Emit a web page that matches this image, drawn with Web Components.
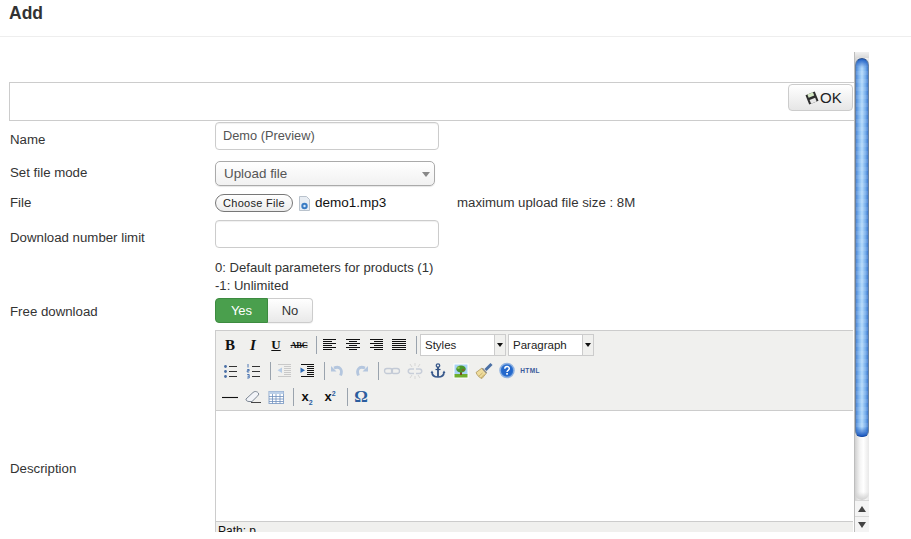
<!DOCTYPE html>
<html>
<head>
<meta charset="utf-8">
<title>Add</title>
<style>
  html, body { margin: 0; background: #fff; height: 539px; overflow: hidden; }
  body { font: 13.25px/18px "Liberation Sans", Arial, sans-serif; color: #333; }
</style>
</head>
<body>
<page-header>Add</page-header>
<scroll-panel>
  <ok-bar>OK</ok-bar>
  <form-row style="--top:1px" label-top="9px">
    <span slot="label">Name</span>
    <text-field>Demo (Preview)</text-field>
  </form-row>
  <form-row style="--top:11px" label-top="3px">
    <span slot="label">Set file mode</span>
    <select-field>Upload file</select-field>
  </form-row>
  <form-row style="--top:8px" label-top="0px">
    <span slot="label">File</span>
    <file-picker file="demo1.mp3" note="maximum upload file size : 8M"></file-picker>
  </form-row>
  <form-row style="--top:8px" label-top="9px">
    <span slot="label">Download number limit</span>
    <text-field></text-field>
  </form-row>
  <form-row style="--top:11px" label-top="0px">
    <div style="font-size:13.100px">0: Default parameters for products (1)<br>-1: Unlimited</div>
  </form-row>
  <form-row style="--top:3px" label-top="5px">
    <span slot="label">Free download</span>
    <yes-no></yes-no>
  </form-row>
  <form-row style="--top:7px" label-top="130px">
    <span slot="label">Description</span>
    <rich-editor></rich-editor>
  </form-row>
</scroll-panel>

<script>
// toolbar glyphs, all in a 20x20 box
const BLUE = '#2b5d9e';
const ICONS = {
  left: '<path d="M3 4.500h13M3 6.500h9M3 8.500h13M3 10.500h9M3 12.500h13M3 14.500h9" stroke="#111"/>',
  center: '<path d="M3 4.500h14M6 6.500h8M3 8.500h14M6 10.500h8M3 12.500h14M6 14.500h8" stroke="#111"/>',
  right: '<path d="M4 4.500h13M8 6.500h9M4 8.500h13M8 10.500h9M4 12.500h13M8 14.500h9" stroke="#111"/>',
  justify: '<path d="M3 4.500h14M3 6.500h14M3 8.500h14M3 10.500h14M3 12.500h14M3 14.500h14" stroke="#111"/>',
  bullist: `<path d="M9 5.500h8M9 10.500h8M9 15.500h8" stroke="#333"/><circle cx="5.500" cy="5.500" r="1.400" fill="#4a6fa5"/><circle cx="5.500" cy="10.500" r="1.400" fill="#4a6fa5"/><circle cx="5.500" cy="15.500" r="1.400" fill="#4a6fa5"/>`,
  numlist: `<path d="M9 5.500h8M9 10.500h8M9 15.500h8" stroke="#333"/><path d="M5 3v3.500M4.200 8.500h2v1.200h-2v1.300h2M4.200 13.500h2v3.500h-2M4.500 15.200h1.500" stroke="#3a69ad" stroke-width=".9" fill="none"/>`,
  outdent: `<path d="M4 3.500h13M10 5.500h7M10 7.500h7M10 9.500h7M10 11.500h7M10 13.500h7M4 15.500h13" stroke="#c9c9c9"/><path d="M8 6.500v5.500L3.500 9.200z" fill="#b5cbe6"/>`,
  indent: `<path d="M4 3.500h13M10 5.500h7M10 7.500h7M10 9.500h7M10 11.500h7M10 13.500h7M4 15.500h13" stroke="#111"/><path d="M3.500 6.500v5.500L8 9.200z" fill="#2f6bb5"/>`,
  undo: `<path d="M6 7c6-2.500 9 2 6.500 7.500" fill="none" stroke="#b4c6de" stroke-width="2.800"/><path d="M3 5v5.500h5.500z" fill="#b4c6de"/>`,
  redo: `<path d="M14 7c-6-2.500-9 2-6.500 7.500" fill="none" stroke="#b4c6de" stroke-width="2.800"/><path d="M17 5v5.500h-5.500z" fill="#b4c6de"/>`,
  link: `<rect x="2.500" y="7.500" width="8" height="5" rx="2.500" fill="none" stroke="#c3cad6" stroke-width="1.300"/><rect x="9.500" y="7.500" width="8" height="5" rx="2.500" fill="none" stroke="#c3cad6" stroke-width="1.300"/>`,
  unlink: `<path d="M9 8H5.500a2 2 0 0 0 0 4.500H9M11 8h3.500a2 2 0 0 1 0 4.500H11" fill="none" stroke="#c8ced9" stroke-width="1.500"/><path d="M10 2v3M10 15v3M5 3l2 3M15 3l-2 3M5 17l2-3M15 17l-2-3" stroke="#d6d6d6"/>`,
  anchor: `<circle cx="10" cy="4.500" r="1.700" fill="none" stroke="#3a5a8c" stroke-width="1.300"/><path d="M10 6v10" stroke="#2f4f80" stroke-width="1.800"/><path d="M7.500 8.500h5" stroke="#2f4f80" stroke-width="1.200"/><path d="M4 11c0 3.500 3 5 6 5s6-1.500 6-5" fill="none" stroke="#3a5a8c" stroke-width="1.700"/><path d="M2.500 12l1.500-2.500L5.500 12M14.500 12l1.500-2.500 1.500 2.500" fill="#3a5a8c"/>`,
  image: `<rect x="2.500" y="2.500" width="15" height="15" fill="#fff"/><rect x="3.500" y="3.500" width="13" height="10" fill="#a9d3f5"/><rect x="3.500" y="13" width="13" height="3.500" fill="#6fae2e"/><rect x="9" y="10" width="2" height="4" fill="#7a4a22"/><ellipse cx="10" cy="8" rx="4.800" ry="3.500" fill="#4a962c"/><circle cx="7.500" cy="6.800" r="1.300" fill="#8ec548"/><circle cx="12.300" cy="9" r="1.100" fill="#9a4a32"/>`,
  cleanup: `<path d="M2 11.500l6-4.500 4.500 5-4.500 5.500c-2.500-.5-5-3.500-6-6z" fill="#efdc9c" stroke="#a58d4d" stroke-width=".7"/><path d="M4.500 15.500l4-3.500M7 17l3-3.500" stroke="#b89f5c" stroke-width=".7"/><path d="M11.500 9L17.500 3" stroke="#4a6fa5" stroke-width="3"/><path d="M8.500 7.500l4 4.500" stroke="#8f8f8f" stroke-width="1.500"/>`,
  help: `<circle cx="10" cy="9.500" r="7" fill="#2f72d0" stroke="#8fb2e2" stroke-width="1.500"/><circle cx="10" cy="9.500" r="5.200" fill="#2468cc"/><path d="M7.800 7.800c0-3 4.500-3 4.500-.2 0 1.800-2.300 1.700-2.300 3.500" fill="none" stroke="#fff" stroke-width="1.500"/><rect x="9.200" y="12" width="1.700" height="1.700" fill="#fff"/>`,
  hr: '<path d="M2 10.500h16" stroke="#111" stroke-width="1.100"/>',
  eraser: `<path d="M3 12l7-6.500c1.500-1.300 3-1.300 4.500-.3s1.500 2.500.3 3.600L9 14.500H6c-1.500 0-3.500-1-3-2.500z" fill="#f2f4f8" stroke="#7d8794"/><path d="M8 15.500h10" stroke="#444"/>`,
  table: `<rect x="3" y="4.500" width="14.500" height="12" fill="#fff" stroke="#8fa9cc"/><rect x="3" y="4.500" width="14.500" height="2.500" fill="#bcd0e8"/><path d="M6.500 7v9.500M10 7v9.500M14 7v9.500M3 9.500h14.500M3 12h14.500M3 14.500h14.500" stroke="#6f8fbd" stroke-width=".8"/>`,
};

class PageHeader extends HTMLElement {
  constructor() {
    super();
    this.attachShadow({ mode: 'open' }).innerHTML = `
      <style>
        :host { display: block; height: 36px; border-bottom: 1px solid #eee; padding-left: 9px;
          font-size: 17.500px; font-weight: bold; line-height: 27px; color: #333; }
      </style><slot></slot>`;
  }
}

class ScrollPanel extends HTMLElement {
  constructor() {
    super();
    this.attachShadow({ mode: 'open' }).innerHTML = `
      <style>
        :host { display: flex; width: 869px; height: 480px; margin-top: 15px; }
        .body { flex: 1; min-width: 0; overflow: hidden; padding-top: 30px; box-sizing: border-box; }
        .bar { width: 15px; flex: none; display: flex; flex-direction: column; box-sizing: border-box;
          border-left: 1px solid #bdbdbd;
          background: linear-gradient(90deg, #d0d0d0, #f4f4f4 35%, #fff 60%, #e8e8e8); }
        .cap { height: 6px; background: linear-gradient(#f0f0f0, #d8d8d8); }
        .thumb { height: 379px; border-radius: 7px 7px 6px 6px; flex: none; box-sizing: border-box;
          border: 1px solid #66809f; border-top-color: #2a4f8a; border-bottom-color: #1c4fa8;
          background: linear-gradient(#1f5fc4 0, #0000 9px, #0000 calc(100% - 9px), #1a58c0 100%),
            repeating-linear-gradient(#0000 0 4px, #ffffff18 4px 8px),
            linear-gradient(90deg, #4c86d6, #82b8f0 25%, #b4dafb 50%, #74acea 80%, #3f7ace); }
        .track { flex: 1; border-radius: 0 0 7px 7px;
          background: linear-gradient(#0000 calc(100% - 8px), #cfcfcf 100%); }
        .arrow { height: 16px; display: flex; align-items: center; justify-content: center; background: #f4f4f4; border-top: 1px solid #d8d8d8; box-sizing: border-box; }
        .up { border-bottom: 6px solid #444; border-left: 4px solid #0000; border-right: 4px solid #0000; }
        .down { border-top: 6px solid #444; border-left: 4px solid #0000; border-right: 4px solid #0000; }
      </style>
      <div class="body"><slot></slot></div>
      <div class="bar">
        <div class="cap"></div><div class="thumb"></div><div class="track"></div>
        <div class="arrow"><i class="up"></i></div><div class="arrow"><i class="down"></i></div>
      </div>`;
  }
}

class OkBar extends HTMLElement {
  constructor() {
    super();
    this.attachShadow({ mode: 'open' }).innerHTML = `
      <style>
        :host { display: flex; justify-content: flex-end; margin-left: 9px; height: 39px; box-sizing: border-box;
          border: 1px solid #ccc; border-right: 0; padding: 1px 1px 0 0; }
        button { all: unset; box-sizing: border-box; width: 65px; height: 27px; display: flex; align-items: center; gap: 1px;
          padding-left: 16px; border: 1px solid #ccc; border-radius: 4px; font-size: 15px; color: #222;
          background: linear-gradient(#fff, #e6e6e6); }
        svg { flex: none; }
      </style>
      <button>
        <svg width="14" height="14" viewBox="0 0 14 14"><g transform="rotate(-22 7 7)"><rect x="2" y="2" width="10" height="10" fill="#2e2e2e"/><rect x="4" y="2" width="6" height="3.500" fill="#d5e8c6"/><rect x="4" y="8" width="6" height="4" fill="#e8e8e8"/></g></svg>
        <slot></slot>
      </button>`;
  }
}

class FormRow extends HTMLElement {
  constructor() {
    super();
    this.attachShadow({ mode: 'open' }).innerHTML = `
      <style>
        :host { display: grid; grid-template-columns: 205px 1fr; padding-left: 10px; margin-top: var(--top, 0); }
        .label { padding-top: var(--label-top, 0); }
        .control { min-width: 0; }
      </style>
      <div class="label"><slot name="label"></slot></div>
      <div class="control"><slot></slot></div>`;
  }
  connectedCallback() {
    this.style.setProperty('--label-top', this.getAttribute('label-top') || '0');
  }
}

class TextField extends HTMLElement {
  constructor() {
    super();
    this.attachShadow({ mode: 'open' }).innerHTML = `
      <style>
        :host { display: block; width: 224px; height: 28px; box-sizing: border-box; border: 1px solid #ccc; border-radius: 4px;
          padding: 3px 7px; font-size: 12.800px; line-height: 20px; color: #555; box-shadow: inset 0 1px 1px #00000010; }
      </style><slot></slot>`;
  }
}

class SelectField extends HTMLElement {
  constructor() {
    super();
    this.attachShadow({ mode: 'open' }).innerHTML = `
      <style>
        :host { display: flex; align-items: center; justify-content: space-between; width: 220px; height: 25px; box-sizing: border-box;
          border: 1px solid #aaa; border-radius: 5px; padding: 0 4px 0 8px; color: #555; font-size: 13.400px;
          background: linear-gradient(#fff, #f1f1f1); box-shadow: 0 1px 1px #0000001a; }
        i { border-top: 5px solid #888; border-left: 4px solid #0000; border-right: 4px solid #0000; margin-top: 2px; }
      </style><span><slot></slot></span><i></i>`;
  }
}

class FilePicker extends HTMLElement {
  connectedCallback() {
    this.attachShadow({ mode: 'open' }).innerHTML = `
      <style>
        :host { display: flex; align-items: center; height: 18px; color: #111; }
        button { all: unset; box-sizing: border-box; width: 78px; height: 18px; border: 1px solid #777; border-radius: 9px;
          font: 11px/16px "Liberation Sans", Arial, sans-serif; letter-spacing: .3px; text-align: center; color: #222;
          background: linear-gradient(#fff, #ececec); }
        svg { margin: 0 5px 0 6px; flex: none; }
        .name { width: 142px; font-size: 13.500px; }
        .note { color: #333; }
      </style>
      <button>Choose File</button>
      <svg width="11" height="15" viewBox="0 0 11 15"><path d="M.5.500h7l3 3v11H.5z" fill="#e8edf3" stroke="#b9c2cc"/><circle cx="5.500" cy="10" r="3.200" fill="#3a7cc4"/><circle cx="5.500" cy="10" r="1.200" fill="#d8e8f8"/></svg>
      <span class="name">${this.getAttribute('file')}</span>
      <span class="note">${this.getAttribute('note')}</span>`;
  }
}

class YesNo extends HTMLElement {
  constructor() {
    super();
    this.attachShadow({ mode: 'open' }).innerHTML = `
      <style>
        :host { display: flex; width: 98px; height: 25px; font-size: 13px; line-height: 23px; text-align: center; }
        div { box-sizing: border-box; border: 1px solid #ccc; }
        .yes { width: 53px; color: #fff; background: #4a9f4d; border-color: #3d8b40; border-radius: 4px 0 0 4px; }
        .no { flex: 1; border-left: 0; border-radius: 0 4px 4px 0; background: linear-gradient(#fff, #e9e9e9); color: #333; box-shadow: 0 1px 1px #0000000d; }
      </style>
      <div class="yes">Yes</div><div class="no">No</div>`;
  }
}

class TbIcon extends HTMLElement {
  connectedCallback() {
    const name = this.getAttribute('name');
    const glyph = name && ICONS[name]
      ? `<svg width="20" height="20" viewBox="0 0 20 20">${ICONS[name]}</svg>` : '<span><slot></slot></span>';
    this.attachShadow({ mode: 'open' }).innerHTML = `
      <style>
        :host { display: flex; align-items: center; justify-content: center; width: 20px; height: 20px; margin-right: 3px;
          font: bold 12px/20px "Liberation Serif", "Times New Roman", serif; color: #111; }
      </style>${glyph}`;
  }
}

class TbSep extends HTMLElement {
  constructor() {
    super();
    this.attachShadow({ mode: 'open' }).innerHTML = `
      <style>:host { display: block; width: 1px; height: 18px; margin: 0 3px 0 4px; background: #9aa3ad; }</style>`;
  }
}

class TbSelect extends HTMLElement {
  constructor() {
    super();
    this.attachShadow({ mode: 'open' }).innerHTML = `
      <style>
        :host { display: flex; width: 86px; height: 22px; box-sizing: border-box; border: 1px solid #ccc; margin-right: 2px;
          background: #fff; font: 11.500px/20px "Liberation Sans", Arial, sans-serif; color: #222; }
        span { flex: 1; padding-left: 4px; }
        b { width: 10px; border-left: 1px solid #ccc; background: #f0f0ee; display: flex; align-items: center; justify-content: center; }
        i { border-top: 4px solid #111; border-left: 3px solid #0000; border-right: 3px solid #0000; }
      </style><span><slot></slot></span><b><i></i></b>`;
  }
}

class RichEditor extends HTMLElement {
  constructor() {
    super();
    const ic = names => names.split(' ').map(n => n === '|' ? '<tb-sep></tb-sep>' : `<tb-icon name="${n}"></tb-icon>`).join('');
    this.attachShadow({ mode: 'open' }).innerHTML = `
      <style>
        :host { display: block; height: 240px; box-sizing: border-box; border: 1px solid #ccc; border-right: 0; margin-right: 1px; background: #fff; }
        .tools { background: #f0f0ee; border-bottom: 1px solid #ccc; padding: 1px 0 0 4px; height: 80px; box-sizing: border-box; }
        .row { display: flex; align-items: center; height: 26px; }
        .area { height: 110px; }
        .status { background: #f0f0ee; border-top: 1px solid #ccc; height: 30px; padding: 3px 0 0 2px; font-size: 12px; line-height: 12px; color: #111; box-sizing: border-box; }
        .sans { font-family: "Liberation Sans", Arial, sans-serif; }
        sub, sup { font-size: 7px; color: ${BLUE}; line-height: 0; }
      </style>
      <div class="tools">
        <div class="row">
          <tb-icon style="font-size:15px;font-weight:900">B</tb-icon>
          <tb-icon style="font-size:15px;font-style:italic">I</tb-icon>
          <tb-icon style="font-size:13px;text-decoration:underline">U</tb-icon>
          <tb-icon style="font-size:8.500px;text-decoration:line-through;letter-spacing:-.3px">ABC</tb-icon>
          ${ic('| left center right justify |')}
          <tb-select>Styles</tb-select><tb-select>Paragraph</tb-select>
        </div>
        <div class="row">
          ${ic('bullist numlist | outdent indent | undo redo | link unlink anchor image cleanup help')}
          <tb-icon style="font:bold 6.500px/20px 'Liberation Sans',sans-serif;letter-spacing:.4px;color:#3a5a9a">HTML</tb-icon>
        </div>
        <div class="row">
          ${ic('hr eraser table |')}
          <tb-icon style="font:bold 13px/20px 'Liberation Sans',sans-serif">x<sub>2</sub></tb-icon>
          <tb-icon style="font:bold 13px/20px 'Liberation Sans',sans-serif">x<sup>2</sup></tb-icon>
          <tb-sep></tb-sep>
          <tb-icon style="font:bold 17px/20px 'Liberation Serif',serif;color:${BLUE}">Ω</tb-icon>
        </div>
      </div>
      <div class="area"></div>
      <div class="status sans">Path: p</div>`;
  }
}

customElements.define('page-header', PageHeader);
customElements.define('scroll-panel', ScrollPanel);
customElements.define('ok-bar', OkBar);
customElements.define('form-row', FormRow);
customElements.define('text-field', TextField);
customElements.define('select-field', SelectField);
customElements.define('file-picker', FilePicker);
customElements.define('yes-no', YesNo);
customElements.define('tb-icon', TbIcon);
customElements.define('tb-sep', TbSep);
customElements.define('tb-select', TbSelect);
customElements.define('rich-editor', RichEditor);
</script>
</body>
</html>
